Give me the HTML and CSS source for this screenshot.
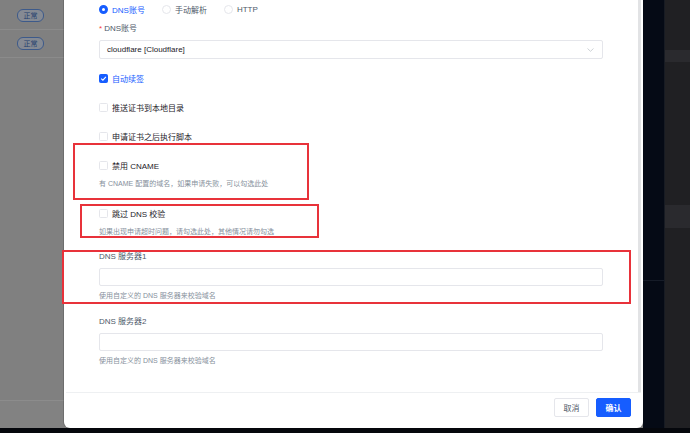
FILE: index.html
```html
<!DOCTYPE html>
<html lang="zh-CN">
<head>
  <meta charset="UTF-8">
  <meta name="viewport" content="width=device-width, initial-scale=1.0">
  <title>申请证书</title>
  <link rel="stylesheet" href="styles.css">
</head>
<body>
  <div class="page">
    <div class="main">
      <div class="row"><span class="tag">正常</span></div>
      <div class="row"><span class="tag">正常</span></div>
      <div class="main-footer"></div>
    </div>
    <div class="sidebar">
      <div class="nav"><div class="nav-top"></div></div>
      <div class="panel">
        <div class="band band-1"></div>
        <div class="band band-2"></div>
      </div>
    </div>
  </div>

  <!-- Apply certificate modal -->
  <div class="modal">
    <div class="modal-body">
      <div class="radio-group">
        <label class="radio checked"><span class="radio-dot"></span>DNS账号</label>
        <label class="radio"><span class="radio-dot"></span>手动解析</label>
        <label class="radio"><span class="radio-dot"></span>HTTP</label>
      </div>

      <div class="field field-select">
        <div class="field-label"><span class="required">*</span>DNS账号</div>
        <div class="select">
          <span>cloudflare [Cloudflare]</span>
          <svg class="chevron" width="7" height="4" viewBox="0 0 7 4"><polyline points="0.5,0.5 3.5,3.3 6.5,0.5" fill="none" stroke="#c2c6cc" stroke-width="0.8"/></svg>
        </div>
      </div>

      <label class="check checked">
        <span class="box"><svg width="7" height="7" viewBox="0 0 7 7"><polyline points="1.2,3.6 2.9,5.2 5.9,1.8" fill="none" stroke="#fff" stroke-width="1.1"/></svg></span>
        自动续签
      </label>
      <label class="check"><span class="box"></span>推送证书到本地目录</label>
      <label class="check"><span class="box"></span>申请证书之后执行脚本</label>

      <div class="check-item item-cname">
        <label class="check"><span class="box"></span>禁用 CNAME</label>
        <div class="help">有 CNAME 配置的域名，如果申请失败，可以勾选此处</div>
      </div>

      <div class="check-item item-skip">
        <label class="check"><span class="box"></span>跳过 DNS 校验</label>
        <div class="help">如果出现申请超时问题，请勾选此处，其他情况请勿勾选</div>
      </div>

      <div class="field">
        <div class="field-label">DNS 服务器1</div>
        <input class="input" type="text">
        <div class="help help-input">使用自定义的 DNS 服务器来校验域名</div>
      </div>

      <div class="field">
        <div class="field-label">DNS 服务器2</div>
        <input class="input" type="text">
        <div class="help help-input">使用自定义的 DNS 服务器来校验域名</div>
      </div>

      <div class="scroll-thumb"></div>
    </div>
    <div class="modal-footer">
      <button class="btn">取消</button>
      <button class="btn btn-primary">确认</button>
    </div>
  </div>

  <!-- annotation boxes -->
  <div class="mark mark-cname"></div>
  <div class="mark mark-skip"></div>
  <div class="mark mark-dns"></div>
</body>
</html>
```

FILE: styles.css
```css
body {
  margin: 0;
  width: 690px;
  height: 433px;
  overflow: hidden;
  position: relative;
  background: #05070c;
  font-family: "Liberation Sans", "Noto Sans CJK SC", sans-serif;
  font-size: 8px;
  color: #1d2129;
}

.page {
  display: flex;
  height: 428px;
}

/* page under the mask */
.main {
  width: 643px;
  display: flex;
  flex-direction: column;
  background: #808080;
  padding-top: 2px;
  box-sizing: border-box;
}

.row {
  height: 28px;
  box-sizing: border-box;
  border-bottom: 1px solid #8b8b8b;
  display: flex;
  align-items: center;
  padding-left: 17px;
}

.tag {
  display: inline-block;
  width: 25px;
  height: 11px;
  line-height: 11px;
  text-align: center;
  font-size: 7px;
  color: #24406e;
  border: 1px solid #3d5a8a;
  border-radius: 6px;
  background: #858a93;
}

.main-footer {
  margin-top: auto;
  height: 27px;
  border-top: 1px solid #8c8c8c;
  background: #828282;
}

.sidebar {
  flex: 1;
  display: flex;
}

.nav {
  width: 21px;
  background: #050a15;
  border-right: 1px solid #171b23;
}

.nav-top {
  height: 280px;
  border-bottom: 1px solid #161c28;
}

.panel {
  flex: 1;
  background: #202023;
}

.band {
  height: 12px;
  background: #2a2a2e;
}

.band-1 {
  margin-top: 50px;
}

.band-2 {
  margin-top: 143px;
  height: 23px;
}

/* modal */
.modal {
  position: absolute;
  left: 64px;
  top: -20px;
  width: 579px;
  height: 448px;
  background: #fff;
  border-radius: 6px;
  box-shadow: -1px 0 0 rgba(0, 0, 0, 0.15);
  display: flex;
  flex-direction: column;
  overflow: hidden;
}

.modal-body {
  flex: 1;
  position: relative;
  padding: 20px 40px 0 35px;
  overflow: hidden;
}

.scroll-thumb {
  position: absolute;
  right: 2px;
  top: 0;
  bottom: 0;
  width: 3px;
  background: #e2e3e5;
}

.radio-group {
  display: flex;
  align-items: center;
  height: 18px;
  margin-bottom: 5px;
}

.radio {
  display: flex;
  align-items: center;
  gap: 4px;
  margin-right: 17px;
  color: #4e5969;
}

.radio-dot {
  width: 9px;
  height: 9px;
  box-sizing: border-box;
  border: 1px solid #e5e6eb;
  border-radius: 50%;
}

.radio.checked {
  color: #165dff;
}

.radio.checked .radio-dot {
  border: 3px solid #165dff;
  background: #fff;
}

.field {
  margin-bottom: 15px;
}

.field.field-select {
  margin-bottom: 13px;
}

.field-label {
  line-height: 12px;
  margin-bottom: 5px;
  color: #4e5969;
}

.required {
  color: #f53f3f;
  margin-right: 2px;
}

.select {
  height: 19px;
  width: 504px;
  box-sizing: border-box;
  border: 1px solid #e5e6eb;
  border-radius: 2px;
  display: flex;
  align-items: center;
  justify-content: space-between;
  padding: 0 8px 0 7px;
  color: #1d2129;
}

.check {
  display: flex;
  align-items: center;
  gap: 4px;
  height: 12px;
  color: #1d2129;
}

label.check {
  margin-bottom: 17px;
}

.check-item label.check {
  margin-bottom: 0;
}

.box {
  width: 9px;
  height: 9px;
  box-sizing: border-box;
  border: 1px solid #e5e6eb;
  border-radius: 1.5px;
  display: flex;
  align-items: center;
  justify-content: center;
}

.check.checked {
  color: #165dff;
}

.check.checked .box {
  background: #165dff;
  border-color: #165dff;
}

.help {
  font-size: 7px;
  line-height: 10px;
  color: #86909c;
  margin-top: 8px;
}

.item-cname {
  margin-bottom: 18px;
}

.item-skip {
  margin-bottom: 14px;
}

.input {
  display: block;
  width: 504px;
  height: 18px;
  box-sizing: border-box;
  border: 1px solid #e5e6eb;
  border-radius: 2px;
  margin: 0;
  padding: 0 7px;
  background: #fff;
}

.help-input {
  margin-top: 5px;
}

.modal-footer {
  height: 36px;
  box-sizing: border-box;
  border-top: 1px solid #eef0f2;
  margin: 0 2px;
  padding: 5px 10px 0 0;
  display: flex;
  justify-content: flex-end;
  align-items: flex-start;
  gap: 7px;
}

.btn {
  width: 35px;
  height: 19px;
  padding: 0;
  font-family: inherit;
  font-size: 8px;
  color: #4e5969;
  background: #fff;
  border: 1px solid #e5e6eb;
  border-radius: 2px;
}

.btn-primary {
  background: #165dff;
  border-color: #165dff;
  color: #fff;
  font-weight: bold;
}

/* red annotation boxes */
.mark {
  position: absolute;
  border: 2px solid #e8323a;
  box-sizing: border-box;
}

.mark-cname {
  left: 73px;
  top: 143px;
  width: 236px;
  height: 57px;
}

.mark-skip {
  left: 80px;
  top: 204px;
  width: 239px;
  height: 34px;
}

.mark-dns {
  left: 62px;
  top: 250px;
  width: 569px;
  height: 54px;
}
```
